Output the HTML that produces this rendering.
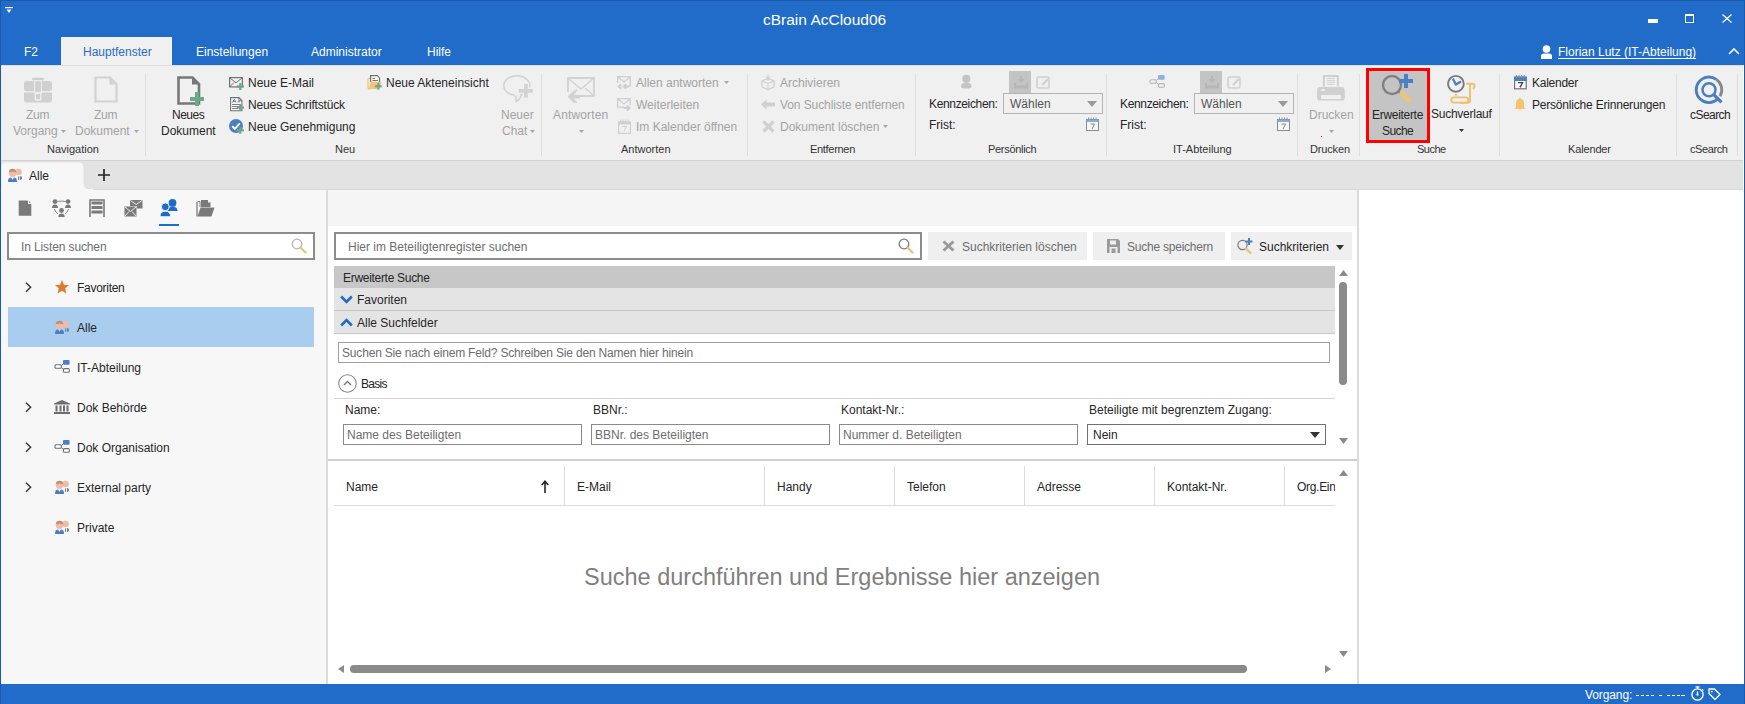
<!DOCTYPE html>
<html><head><meta charset="utf-8">
<style>
*{margin:0;padding:0;box-sizing:border-box}
html,body{width:1745px;height:704px;overflow:hidden;background:#fff;font-family:"Liberation Sans",sans-serif;font-size:12px;color:#262626}
.a{position:absolute}
.t{position:absolute;white-space:nowrap;line-height:14px}
.w{color:#fff}
.dis{color:#a3a3a3}
.sep{position:absolute;width:1px;top:74px;height:82px;background:#dedede}
.lbl{position:absolute;white-space:nowrap;line-height:14px;top:142px;color:#333;font-size:11px}
svg{position:absolute;overflow:visible}
</style></head><body>

<!-- ===== TITLE BAR ===== -->
<div class="a" style="left:0;top:0;width:1745px;height:65px;background:#216bc9"></div>
<div class="a" style="left:0;top:0;width:1745px;height:1px;background:#1b5aab"></div>
<!-- quick access icon -->
<svg style="left:4px;top:6px" width="10" height="8" viewBox="0 0 10 8"><rect x="1" y="1" width="8" height="1.2" fill="#fff"/><path d="M2.6 3.6 L7.4 3.6 L5 7 Z" fill="#fff"/></svg>
<div class="t w" style="left:763px;top:11px;font-size:15.5px;line-height:18px">cBrain AcCloud06</div>
<!-- window controls -->
<div class="a" style="left:1648px;top:19px;width:10px;height:4px;background:#fff"></div>
<div class="a" style="left:1685px;top:14px;width:9px;height:9px;border:1px solid #fff;border-top-width:2px"></div>
<svg style="left:1722px;top:14px" width="10" height="9" viewBox="0 0 10 9"><path d="M0.5 0.5 L9.5 8.5 M9.5 0.5 L0.5 8.5" stroke="#fff" stroke-width="1.3"/></svg>

<!-- ribbon tabs -->
<div class="t w" style="left:24px;top:45px">F2</div>
<div class="a" style="left:61px;top:37px;width:111px;height:28px;background:#f0f0f0"></div>
<div class="t" style="left:83px;top:45px;color:#2b6cc4">Hauptfenster</div>
<div class="t w" style="left:196px;top:45px">Einstellungen</div>
<div class="t w" style="left:311px;top:45px">Administrator</div>
<div class="t w" style="left:427px;top:45px">Hilfe</div>
<!-- user -->
<svg style="left:1541px;top:45px" width="11" height="14" viewBox="0 0 11 14"><circle cx="5.5" cy="4" r="3.8" fill="#fff"/><path d="M0 14 L0 11 Q0 8.5 3 8.5 L8 8.5 Q11 8.5 11 11 L11 14 Z" fill="#fff"/></svg>
<div class="t w" style="left:1558px;top:45px;text-decoration:underline;text-decoration-skip-ink:none;text-underline-offset:2px">Florian Lutz (IT-Abteilung)</div>
<svg style="left:1728px;top:47px" width="12" height="8" viewBox="0 0 12 8"><path d="M1 7 L6 2 L11 7" stroke="#fff" stroke-width="1.6" fill="none"/></svg>

<!-- ===== RIBBON ===== -->
<div class="a" style="left:1px;top:65px;width:1742px;height:96px;background:#f0f0f0"></div>
<div class="a" style="left:1px;top:160px;width:1742px;height:1px;background:#d2d2d2"></div>
<div class="a" style="left:1px;top:65px;width:1742px;height:1px;background:#dedede"></div>

<div class="sep" style="left:145px"></div>
<div class="sep" style="left:541px"></div>
<div class="sep" style="left:747px"></div>
<div class="sep" style="left:915px"></div>
<div class="sep" style="left:1106px"></div>
<div class="sep" style="left:1297px"></div>
<div class="sep" style="left:1359px"></div>
<div class="sep" style="left:1499px"></div>
<div class="sep" style="left:1676px"></div>
<div class="sep" style="left:1737px"></div>

<div class="lbl" style="left:47px">Navigation</div>
<div class="lbl" style="left:335px">Neu</div>
<div class="lbl" style="left:621px">Antworten</div>
<div class="lbl" style="left:810px;letter-spacing:-0.3px">Entfernen</div>
<div class="lbl" style="left:988px;letter-spacing:-0.3px">Persönlich</div>
<div class="lbl" style="left:1173px">IT-Abteilung</div>
<div class="lbl" style="left:1310px;letter-spacing:-0.15px">Drucken</div>
<div class="lbl" style="left:1417px;letter-spacing:-0.5px">Suche</div>
<div class="lbl" style="left:1568px;letter-spacing:-0.15px">Kalender</div>
<div class="lbl" style="left:1690px;letter-spacing:-0.4px">cSearch</div>

<!-- Navigation -->
<svg style="left:24px;top:77px" width="28" height="26" viewBox="0 0 28 26"><rect x="8" y="0.8" width="12" height="2.6" rx="1.3" fill="#d0d0d0"/><rect x="0" y="3.9" width="28" height="10.3" rx="2.3" fill="#d0d0d0"/><path d="M0 15.4 L28 15.4 L28 23.2 Q28 25.4 25.8 25.4 L2.2 25.4 Q0 25.4 0 23.2 Z" fill="#d0d0d0"/><rect x="10.1" y="3.3" width="7.8" height="12.8" rx="0.6" fill="#f0f0f0"/><rect x="11.1" y="4.2" width="5.8" height="11" fill="#d0d0d0"/><rect x="11.2" y="16.4" width="5.6" height="6.6" rx="0.8" fill="#d0d0d0" stroke="#f0f0f0" stroke-width="1.3"/></svg>
<svg style="left:94px;top:76px" width="24" height="27" viewBox="0 0 24 27"><path d="M1.5 1.5 L16 1.5 L22.5 8 L22.5 25.5 L1.5 25.5 Z" stroke="#d2d2d2" stroke-width="2.2" fill="none"/><path d="M15.5 1.5 L15.5 8.5 L22.5 8.5" fill="#d2d2d2"/></svg>
<div class="t dis" style="left:26px;top:108px;letter-spacing:-0.3px">Zum</div>
<div class="t dis" style="left:13px;top:124px">Vorgang</div>
<svg style="left:61px;top:130px" width="5" height="3" viewBox="0 0 5 3"><path d="M0 0 L5 0 L2.5 3 Z" fill="#a8a8a8"/></svg>
<div class="t dis" style="left:94px;top:108px;letter-spacing:-0.3px">Zum</div>
<div class="t dis" style="left:75px;top:124px">Dokument</div>
<svg style="left:134px;top:130px" width="5" height="3" viewBox="0 0 5 3"><path d="M0 0 L5 0 L2.5 3 Z" fill="#a8a8a8"/></svg>

<!-- Neu -->
<svg style="left:177px;top:76px" width="28" height="30" viewBox="0 0 28 30"><path d="M1.5 1.5 L15.5 1.5 L22 8 L22 27.5 L1.5 27.5 Z" stroke="#787878" stroke-width="2.6" fill="none"/><path d="M15 1.5 L15 8.5 L22 8.5 Z" fill="#787878"/><rect x="18" y="16" width="4" height="14" fill="#6fa78b"/><rect x="13" y="21" width="14" height="4" fill="#6fa78b"/></svg>
<div class="t" style="left:172px;top:108px;letter-spacing:-0.5px">Neues</div>
<div class="t" style="left:161px;top:124px">Dokument</div>

<svg style="left:229px;top:77px" width="16" height="14" viewBox="0 0 16 14"><rect x="0.6" y="0.6" width="12.8" height="9.3" fill="none" stroke="#727272" stroke-width="1.2"/><path d="M0.8 0.8 L7 5.8 L13.2 0.8 M1 9.5 L5 5.5" stroke="#727272" stroke-width="1" fill="none"/><rect x="10.200000000000001" y="6.0" width="2.2" height="7" fill="#6fa78b"/><rect x="7.700000000000001" y="8.4" width="7.2" height="2.2" fill="#6fa78b"/></svg>
<svg style="left:229px;top:97px" width="16" height="15" viewBox="0 0 16 15"><path d="M1.6 0.6 L10 0.6 L12.9 3.5 L12.9 13.7 L1.6 13.7 Z" fill="#fafafa" stroke="#727272" stroke-width="1.1"/><path d="M9.8 0.6 L9.8 3.7 L12.9 3.7" fill="none" stroke="#727272" stroke-width="0.9"/><path d="M3.5 5.5 L5.3 2.2 L7.1 5.5 M4.2 4.4 L6.4 4.4" stroke="#4a80c2" stroke-width="1" fill="none"/><path d="M8.5 4.8 L11 4.8 M3 7.5 L11 7.5 M3 9.5 L11 9.5 M3 11.5 L9 11.5" stroke="#727272" stroke-width="0.9"/><rect x="10.200000000000001" y="7.0" width="2.2" height="7" fill="#6fa78b"/><rect x="7.700000000000001" y="9.4" width="7.2" height="2.2" fill="#6fa78b"/></svg>
<svg style="left:229px;top:119px" width="16" height="16" viewBox="0 0 16 16"><circle cx="7" cy="7" r="7" fill="#4a80c2"/><path d="M3.2 7.3 L5.8 9.8 L10.8 4.3" stroke="#fff" stroke-width="1.9" fill="none"/><rect x="10.200000000000001" y="7.800000000000001" width="2.2" height="7" fill="#6fa78b"/><rect x="7.700000000000001" y="10.200000000000001" width="7.2" height="2.2" fill="#6fa78b"/></svg>
<div class="t" style="left:248px;top:76px">Neue E-Mail</div>
<div class="t" style="left:248px;top:98px;letter-spacing:-0.18px">Neues Schriftstück</div>
<div class="t" style="left:248px;top:120px">Neue Genehmigung</div>

<svg style="left:367px;top:74px" width="16" height="17" viewBox="0 0 16 17"><path d="M3.5 4 Q1 4 1 6 L1 13 Q1 15 3 15" stroke="#efc274" stroke-width="1.3" fill="none"/><path d="M3.6 8 L3.6 1.6 L10.2 1.6 L12.5 3.9 L12.5 8" fill="#fafafa" stroke="#707070" stroke-width="1.2"/><path d="M5.5 4.4 L8 4.4 M5.5 6.5 L10.8 6.5" stroke="#707070" stroke-width="1"/><path d="M3.5 7.7 L14.8 7.7 L11.8 14.9 L1.8 14.9 Z" fill="#f0c674"/><rect x="10.3" y="8.9" width="2.2" height="6.8" fill="#6fa78b"/><rect x="8.0" y="11.200000000000001" width="6.8" height="2.2" fill="#6fa78b"/></svg>
<div class="t" style="left:386px;top:76px">Neue Akteneinsicht</div>

<svg style="left:503px;top:75px" width="30" height="28" viewBox="0 0 30 28"><ellipse cx="13.8" cy="10.6" rx="13" ry="9.8" fill="none" stroke="#d2d2d2" stroke-width="1.6"/><path d="M11 20 Q14 21.5 13 26.5 Q17 25 18 20" fill="#f0f0f0" stroke="#d2d2d2" stroke-width="1.5"/><path d="M11.5 19.6 L17 19.6" stroke="#f0f0f0" stroke-width="1.8"/><path d="M21 9 L24.8 9 L24.8 14 L29.8 14 L29.8 17.8 L24.8 17.8 L24.8 22.8 L21 22.8 L21 17.8 L15.8 17.8 L15.8 14 L21 14 Z" fill="#d2d2d2" stroke="#f0f0f0" stroke-width="2.4" paint-order="stroke"/></svg>
<div class="t dis" style="left:501px;top:108px">Neuer</div>
<div class="t dis" style="left:502px;top:124px">Chat</div>
<svg style="left:530px;top:130px" width="5" height="3" viewBox="0 0 5 3"><path d="M0 0 L5 0 L2.5 3 Z" fill="#a8a8a8"/></svg>

<!-- Antworten -->
<svg style="left:567px;top:77px" width="29" height="27" viewBox="0 0 29 27"><path d="M13 19 L27 19 L27 1 L1 1 L1 15" stroke="#d2d2d2" stroke-width="1.9" fill="none" stroke-linejoin="round"/><path d="M1.5 1.5 L14 12 L26.5 1.5 M26.5 18.5 L18 11 M7.5 15 L10 12.5" stroke="#d2d2d2" stroke-width="1.4" fill="none"/><path d="M0.5 19.5 L6.5 13.8 L10.5 13.8 L6.8 17.8 L13 17.8 L13 21.6 L6.8 21.6 L10.5 25.7 L6.5 25.7 Z" fill="#d2d2d2"/></svg>
<div class="t dis" style="left:553px;top:108px;letter-spacing:0.15px">Antworten</div>
<svg style="left:579px;top:130px" width="5" height="3" viewBox="0 0 5 3"><path d="M0 0 L5 0 L2.5 3 Z" fill="#a8a8a8"/></svg>

<svg style="left:617px;top:76px" width="15" height="14" viewBox="0 0 15 14"><path d="M12 9.9 L13.2 9.9 L13.2 0.7 L0.7 0.7 L0.7 7" stroke="#cdcdcd" stroke-width="1.3" fill="none"/><path d="M1 1 L7 6 L13 1" stroke="#cdcdcd" stroke-width="1.1" fill="none"/><path d="M4.2 8.2 L1.8 10.5 L4.2 12.8 M9.2 8.2 L6.8 10.5 L9.2 12.8 M7.5 10.5 L12 10.5" stroke="#cdcdcd" stroke-width="2" fill="none"/></svg>
<svg style="left:617px;top:98px" width="15" height="14" viewBox="0 0 15 14"><path d="M7 9.2 L0.7 9.2 L0.7 0.7 L13.2 0.7 L13.2 7" stroke="#cdcdcd" stroke-width="1.3" fill="none"/><path d="M1 1 L7 6 L13 1" stroke="#cdcdcd" stroke-width="1.1" fill="none"/><path d="M6.5 10 L12 10 M10 7.5 L12.6 10 L10 12.5" stroke="#cdcdcd" stroke-width="2" fill="none"/></svg>
<svg style="left:618px;top:119px" width="13" height="15" viewBox="0 0 13 15"><rect x="0.6" y="3" width="11.8" height="11.4" fill="none" stroke="#cfcfcf" stroke-width="1.2"/><rect x="0.6" y="3" width="11.8" height="2.5" fill="#cfcfcf"/><path d="M2.5 0.5 L2.5 3 M5 0.5 L5 3 M7.5 0.5 L7.5 3 M10 0.5 L10 3" stroke="#cfcfcf" stroke-width="1"/><path d="M4.5 7.5 L8.5 7.5 L6 12.5" stroke="#cfcfcf" stroke-width="1" fill="none"/></svg>
<div class="t dis" style="left:636px;top:76px">Allen antworten</div>
<svg style="left:724px;top:81px" width="5" height="3" viewBox="0 0 5 3"><path d="M0 0 L5 0 L2.5 3 Z" fill="#a8a8a8"/></svg>
<div class="t dis" style="left:636px;top:98px">Weiterleiten</div>
<div class="t dis" style="left:636px;top:120px">Im Kalender öffnen</div>

<!-- Entfernen -->
<svg style="left:761px;top:74px" width="14" height="16" viewBox="0 0 14 16"><path d="M7 0.5 L7 5 M5 3 L7 5.5 L9 3" stroke="#d0d0d0" stroke-width="1.4" fill="none"/><path d="M1 7 L7 4.5 L13 7 L13 13 L7 15.5 L1 13 Z" fill="none" stroke="#d0d0d0" stroke-width="1.3"/><path d="M1 7 L7 9.5 L13 7 M7 9.5 L7 15.5" stroke="#d0d0d0" stroke-width="1.1" fill="none"/></svg>
<svg style="left:761px;top:99px" width="14" height="11" viewBox="0 0 14 11"><path d="M0 5.5 L5.5 0.5 L5.5 3.5 L14 3.5 L14 7.5 L5.5 7.5 L5.5 10.5 Z" fill="#d0d0d0"/></svg>
<svg style="left:762px;top:120px" width="13" height="13" viewBox="0 0 13 13"><path d="M1.5 1.5 L11.5 11.5 M11.5 1.5 L1.5 11.5" stroke="#d0d0d0" stroke-width="3.2"/></svg>
<div class="t dis" style="left:780px;top:76px">Archivieren</div>
<div class="t dis" style="left:780px;top:98px;letter-spacing:-0.09px">Von Suchliste entfernen</div>
<div class="t dis" style="left:780px;top:120px">Dokument löschen</div>
<svg style="left:883px;top:125px" width="5" height="3" viewBox="0 0 5 3"><path d="M0 0 L5 0 L2.5 3 Z" fill="#a8a8a8"/></svg>

<!-- Persönlich -->
<svg style="left:961px;top:74px" width="11" height="15" viewBox="0 0 11 15"><circle cx="5.3" cy="4.8" r="4.1" fill="#c4c4c4"/><path d="M0 12.5 Q0 8.6 5.3 8.6 Q10.6 8.6 10.6 12.5 Q10.6 14.6 5.3 14.6 Q0 14.6 0 12.5 Z" fill="#c4c4c4"/></svg>
<div class="a" style="left:1009px;top:71px;width:22px;height:22px;background:#c4c4c4"></div>
<svg style="left:1014px;top:76px" width="13" height="12" viewBox="0 0 13 12"><path d="M7 0 L7 5 M4.5 3 L7 5.5 L9.5 3" stroke="#b6b6b6" stroke-width="1.8" fill="none"/><path d="M0 7 L2 7 L2 9.5 L12 9.5 L12 7 L14 7 L14 12.5 L0 12.5 Z" fill="#b6b6b6"/></svg>
<svg style="left:1036px;top:76px" width="14" height="13" viewBox="0 0 14 13"><rect x="1" y="1" width="12" height="11" rx="1.5" fill="none" stroke="#d0d0d0" stroke-width="1.6"/><path d="M6 9 L12 3" stroke="#d0d0d0" stroke-width="2.2"/></svg>
<div class="t" style="left:929px;top:97px;letter-spacing:-0.35px">Kennzeichen:</div>
<div class="a" style="left:1003px;top:93px;width:100px;height:21px;border:1px solid #b4b4b4;background:#f0f0f0"></div>
<div class="t" style="left:1010px;top:97px;color:#555">Wählen</div>
<svg style="left:1087px;top:101px" width="10" height="6" viewBox="0 0 10 6"><path d="M0 0 L10 0 L5 6 Z" fill="#9a9a9a"/></svg>
<div class="t" style="left:929px;top:118px">Frist:</div>
<svg style="left:1086px;top:117px" width="13" height="14" viewBox="0 0 13 14"><rect x="0.5" y="2.5" width="12" height="11" fill="#f7f7f7" stroke="#8a8a8a" stroke-width="1"/><rect x="0.5" y="2.5" width="12" height="2.5" fill="#86acd8"/><path d="M2.5 0.5 L2.5 2.5 M5 0.5 L5 2.5 M7.5 0.5 L7.5 2.5 M10 0.5 L10 2.5" stroke="#8a8a8a" stroke-width="0.9"/><path d="M4.5 7 L8.5 7 L6 12" stroke="#7a7a7a" stroke-width="0.9" fill="none"/></svg>

<!-- IT-Abteilung -->
<svg style="left:1149px;top:75px" width="16" height="13" viewBox="0 0 16 13"><rect x="1" y="4.7" width="6.3" height="3.6" rx="1" fill="#f0f0f0" stroke="#b5b5b5" stroke-width="1.1"/><rect x="9" y="0" width="6.6" height="4.7" rx="1" fill="#8fb3db"/><rect x="9.5" y="8.6" width="5.8" height="3.7" rx="1" fill="#f0f0f0" stroke="#b5b5b5" stroke-width="1.1"/><path d="M7.3 5.5 L9 4 M7.3 7.5 L9.5 9.3" stroke="#b5b5b5" stroke-width="1" fill="none"/></svg>
<div class="a" style="left:1200px;top:71px;width:22px;height:22px;background:#c4c4c4"></div>
<svg style="left:1205px;top:76px" width="13" height="12" viewBox="0 0 13 12"><path d="M7 0 L7 5 M4.5 3 L7 5.5 L9.5 3" stroke="#b6b6b6" stroke-width="1.8" fill="none"/><path d="M0 7 L2 7 L2 9.5 L12 9.5 L12 7 L14 7 L14 12.5 L0 12.5 Z" fill="#b6b6b6"/></svg>
<svg style="left:1227px;top:76px" width="14" height="13" viewBox="0 0 14 13"><rect x="1" y="1" width="12" height="11" rx="1.5" fill="none" stroke="#d0d0d0" stroke-width="1.6"/><path d="M6 9 L12 3" stroke="#d0d0d0" stroke-width="2.2"/></svg>
<div class="t" style="left:1120px;top:97px;letter-spacing:-0.35px">Kennzeichen:</div>
<div class="a" style="left:1194px;top:93px;width:100px;height:21px;border:1px solid #b4b4b4;background:#f0f0f0"></div>
<div class="t" style="left:1201px;top:97px;color:#555">Wählen</div>
<svg style="left:1278px;top:101px" width="10" height="6" viewBox="0 0 10 6"><path d="M0 0 L10 0 L5 6 Z" fill="#9a9a9a"/></svg>
<div class="t" style="left:1120px;top:118px">Frist:</div>
<svg style="left:1277px;top:117px" width="13" height="14" viewBox="0 0 13 14"><rect x="0.5" y="2.5" width="12" height="11" fill="#f7f7f7" stroke="#8a8a8a" stroke-width="1"/><rect x="0.5" y="2.5" width="12" height="2.5" fill="#86acd8"/><path d="M2.5 0.5 L2.5 2.5 M5 0.5 L5 2.5 M7.5 0.5 L7.5 2.5 M10 0.5 L10 2.5" stroke="#8a8a8a" stroke-width="0.9"/><path d="M4.5 7 L8.5 7 L6 12" stroke="#7a7a7a" stroke-width="0.9" fill="none"/></svg>

<!-- Drucken -->
<svg style="left:1317px;top:75px" width="28" height="26" viewBox="0 0 28 26"><path d="M6.9 11.5 L6.9 1 L20.9 1 L20.9 11.5" stroke="#d0d0d0" stroke-width="2" fill="none"/><path d="M10 3.5 L18 3.5 M10 5.5 L18 5.5 M10 7.5 L18 7.5 M10 9.5 L18 9.5" stroke="#d0d0d0" stroke-width="0.9"/><rect x="0" y="11.9" width="27.8" height="13.7" rx="3.2" fill="#d0d0d0"/><rect x="4" y="14.3" width="4" height="1.8" rx="0.8" fill="#f0f0f0"/><rect x="4" y="20.1" width="20" height="3.8" rx="1" fill="#f0f0f0"/></svg>
<div class="t dis" style="left:1309px;top:108px">Drucken</div>
<svg style="left:1329px;top:130px" width="5" height="3" viewBox="0 0 5 3"><path d="M0 0 L5 0 L2.5 3 Z" fill="#a8a8a8"/></svg>
<div class="a" style="left:1321px;top:136px;width:1px;height:1px;background:#f00"></div>

<!-- Suche -->
<div class="a" style="left:1366px;top:68px;width:64px;height:75px;border:3px solid #ff0000;background:#c4c4c4"></div>
<svg style="left:1381px;top:73px" width="33" height="33" viewBox="0 0 33 33"><circle cx="11" cy="12" r="9" fill="none" stroke="#808080" stroke-width="2.4"/><path d="M17 18 L19 20" stroke="#808080" stroke-width="2.4"/><path d="M21 20.5 L28.5 28" stroke="#e9c47c" stroke-width="5" stroke-linecap="round"/><rect x="23" y="1" width="4" height="14" fill="#4a80c2"/><rect x="18" y="6" width="14" height="4" fill="#4a80c2"/></svg>
<div class="t" style="left:1372px;top:108px;letter-spacing:-0.3px">Erweiterte</div>
<div class="t" style="left:1382px;top:124px;letter-spacing:-0.6px">Suche</div>

<svg style="left:1440px;top:70px" width="42" height="38" viewBox="0 0 42 38"><circle cx="15.9" cy="13.8" r="7.9" fill="none" stroke="#7a7a7a" stroke-width="1.9"/><path d="M13.3 9.5 L15.8 14.6 L20.2 12" stroke="#4a80c2" stroke-width="2.3" fill="none" stroke-linejoin="round" stroke-linecap="round"/><rect x="14.9" y="23.9" width="2" height="2" fill="#ecc16e"/><rect x="11.3" y="27.4" width="17" height="5.3" rx="2.65" fill="none" stroke="#ecc16e" stroke-width="1.8"/><path d="M30 14 L30 30.5 Q30 32.7 27.8 32.7 L20 32.7" stroke="#ecc16e" stroke-width="1.9" fill="none"/><path d="M26.2 13.8 L32.4 13.8 Q34.6 13.8 34.6 16 Q34.6 18 32.8 18.8" stroke="#ecc16e" stroke-width="1.9" fill="none"/></svg>
<div class="t" style="left:1431px;top:107px;letter-spacing:-0.25px">Suchverlauf</div>
<svg style="left:1459px;top:129px" width="5" height="3" viewBox="0 0 5 3"><path d="M0 0 L5 0 L2.5 3 Z" fill="#333"/></svg>

<!-- Kalender -->
<svg style="left:1514px;top:75px" width="13" height="15" viewBox="0 0 13 15"><rect x="0.6" y="2" width="11.6" height="11.8" fill="#fafafa" stroke="#747474" stroke-width="1.2"/><rect x="0" y="2" width="12.8" height="4" fill="#4a80c2"/><path d="M2.5 0 L2.5 3 M5 0 L5 3 M7.6 0 L7.6 3 M10.2 0 L10.2 3" stroke="#8a8a8a" stroke-width="1.1"/><path d="M4 7.6 L8.6 7.6 L6 12.4" stroke="#444" stroke-width="1.3" fill="none"/></svg>
<div class="t" style="left:1532px;top:76px;letter-spacing:-0.25px">Kalender</div>
<svg style="left:1514px;top:97px" width="12" height="14" viewBox="0 0 12 14"><path d="M6 0.5 Q6.8 0.5 6.8 1.8 Q10 2.6 10 6.5 L10 10 L11.5 12 L0.5 12 L2 10 L2 6.5 Q2 2.6 5.2 1.8 Q5.2 0.5 6 0.5 Z" fill="#f2c46e"/><path d="M4.5 12.5 Q6 14.5 7.5 12.5 Z" fill="#f2c46e"/></svg>
<div class="t" style="left:1532px;top:98px;letter-spacing:-0.2px">Persönliche Erinnerungen</div>

<!-- cSearch -->
<svg style="left:1685px;top:68px" width="50" height="42" viewBox="0 0 50 42"><path d="M32.57 31.3 A12.8 12.8 0 1 1 31.35 11.32" stroke="#4a7fbf" stroke-width="2.8" fill="none"/><path d="M31.35 11.32 A12.8 12.8 0 0 1 35.08 28.2" stroke="#878787" stroke-width="2.8" fill="none"/><circle cx="24" cy="21.8" r="6.5" fill="none" stroke="#4a7fbf" stroke-width="2.5"/><path d="M28.8 26.6 L36.5 34.3" stroke="#4a7fbf" stroke-width="3.3"/></svg>
<div class="t" style="left:1690px;top:108px;letter-spacing:-0.55px">cSearch</div>


<!-- ===== DOC TAB STRIP ===== -->
<div class="a" style="left:1px;top:161px;width:1742px;height:29px;background:#e3e3e3"></div>
<div class="a" style="left:1px;top:189px;width:1742px;height:1px;background:#d9d9d9"></div>

<!-- doc tab -->
<svg style="left:1px;top:162px" width="92" height="28" viewBox="0 0 92 28"><path d="M0 28 L0 5 Q0 0 5 0 L77 0 Q83 0 83 6 L83 20 Q83 27 90 28 Z" fill="#f7f7f7" stroke="#d8d8d8" stroke-width="0.6"/><rect x="0" y="27" width="92" height="1" fill="#f7f7f7"/></svg>
<svg style="left:8px;top:168px" width="15" height="14" viewBox="0 0 15 14"><circle cx="10.6" cy="3.9" r="3.2" fill="#f2bba6"/><circle cx="4.5" cy="5.3" r="3.6" fill="#f2bba6"/><path d="M0.8 5 Q0.6 0.6 4.5 0.7 Q8.6 0.7 8.4 5 L7.2 3.6 L6 4.6 L4.5 3 L3 4.6 L1.8 3.6 Z" fill="#b99270"/><path d="M0 14 Q0 9.6 3 9.6 L4.5 11.8 L6 9.6 Q9 9.6 9 14 Z" fill="#4a80c0"/><path d="M12 8 A2 2 0 0 1 12 12 Z" fill="#7a7a7a"/><rect x="10" y="8.3" width="1.2" height="3.5" fill="#6d8db0"/></svg>
<div class="t" style="left:29px;top:169px">Alle</div>
<svg style="left:98px;top:169px" width="12" height="12" viewBox="0 0 12 12"><path d="M6 0 L6 12 M0 6 L12 6" stroke="#262626" stroke-width="1.7"/></svg>

<!-- left panel -->
<div class="a" style="left:1px;top:190px;width:325px;height:494px;background:#f7f7f7"></div>
<div class="a" style="left:326px;top:190px;width:2px;height:494px;background:#dcdcdc"></div>
<!-- left toolbar icons -->
<svg style="left:18px;top:200px" width="14" height="16" viewBox="0 0 14 16"><path d="M0.7 0.5 L9.5 0.5 L13.3 4.3 L13.3 15.7 L0.7 15.7 Z" fill="#7a7a7a"/><path d="M10 0 L14 4 L10 4 Z" fill="#f7f7f7"/><rect x="11" y="1.5" width="1.3" height="1.3" fill="#7a7a7a"/></svg>
<svg style="left:52px;top:199px" width="19" height="19" viewBox="0 0 19 19"><circle cx="3" cy="2.6" r="2.4" fill="#7a7a7a"/><circle cx="16" cy="2.6" r="2.4" fill="#7a7a7a"/><path d="M0 9 Q0 5.5 3 5.5 Q6 5.5 6 9 Z M13 9 Q13 5.5 16 5.5 Q19 5.5 19 9 Z" fill="#7a7a7a"/><circle cx="9.5" cy="11.5" r="2.4" fill="#7a7a7a"/><path d="M6.3 18 Q6.3 14.5 9.5 14.5 Q12.7 14.5 12.7 18 Z" fill="#7a7a7a"/><path d="M5.5 2.5 Q9.5 1.5 13.5 2.5 M2.5 10 Q3.5 13.5 6 15 M16.5 10 Q15.5 13.5 13 15" stroke="#7a7a7a" stroke-width="0.9" fill="none"/></svg>
<svg style="left:89px;top:199px" width="16" height="18" viewBox="0 0 16 18"><path d="M1 18 L1 1 L15 1 L15 18" stroke="#7a7a7a" stroke-width="1.6" fill="none"/><rect x="2.5" y="2.5" width="11" height="3" fill="#7a7a7a"/><rect x="2.5" y="7" width="11" height="3" fill="#7a7a7a"/><rect x="2.5" y="11.5" width="11" height="3" fill="#7a7a7a"/></svg>
<svg style="left:124px;top:199px" width="19" height="18" viewBox="0 0 19 18"><path d="M6 1 L18.5 1 L18.5 9.5 L13 9.5 L13 7 L6 7 Z" fill="#7a7a7a"/><path d="M6.5 1.5 L12.2 5.5 L18 1.5" stroke="#f7f7f7" stroke-width="0.9" fill="none"/><rect x="0.5" y="7.5" width="12" height="10" fill="#7a7a7a"/><path d="M1 8 L6.5 12.5 L12 8 M1 17 L5 12.5 M12 17 L8 12.5" stroke="#f7f7f7" stroke-width="0.9" fill="none"/></svg>
<svg style="left:160px;top:199px" width="18" height="18" viewBox="0 0 18 18"><circle cx="12.5" cy="3.9" r="3.9" fill="#1f6bc9"/><path d="M8 12 Q8 7.8 12.5 7.8 Q17.5 7.8 17.5 12 Z" fill="#1f6bc9"/><circle cx="5.3" cy="7.8" r="3.9" fill="#1f6bc9" stroke="#f7f7f7" stroke-width="0.9"/><path d="M0 17.7 Q0 12.2 5.3 12.2 Q10.6 12.2 10.6 17.7 Z" fill="#1f6bc9" stroke="#f7f7f7" stroke-width="0.9"/></svg>
<div class="a" style="left:159px;top:224px;width:20px;height:2px;background:#1f6bc9"></div>
<svg style="left:196px;top:199px" width="19" height="18" viewBox="0 0 19 18"><path d="M5 1 L12 1 L14.5 3.5 L14.5 8 L5 8 Z" fill="#7a7a7a"/><path d="M12 0.5 L15 3.5 L12 3.5 Z" fill="#f7f7f7"/><path d="M1.5 2.5 L4 2.5 L4 8" stroke="#7a7a7a" stroke-width="1" fill="none"/><path d="M1 3 L1 17.5" stroke="#7a7a7a" stroke-width="1.3"/><path d="M4.5 8.5 L18.5 8.5 L15.5 17.5 L1.5 17.5 Z" fill="#7a7a7a"/></svg>

<!-- left search -->
<div class="a" style="left:7px;top:232px;width:308px;height:28px;border:2px solid #8c8c8c;background:#fff"></div>
<div class="t" style="left:21px;top:240px;color:#6d6d6d;letter-spacing:-0.12px">In Listen suchen</div>
<svg style="left:291px;top:238px" width="16" height="16" viewBox="0 0 16 16"><circle cx="6" cy="6" r="4.8" fill="none" stroke="#b5b5b5" stroke-width="1.3"/><path d="M10 10 L14.5 14.5" stroke="#e9c47c" stroke-width="2.4" stroke-linecap="round"/></svg>

<!-- tree -->
<div class="a" style="left:8px;top:307px;width:306px;height:40px;background:#a9cdef"></div>
<svg style="left:25px;top:282px" width="7" height="11" viewBox="0 0 7 11"><path d="M1 0.8 L5.6 5.3 L1 9.8" stroke="#333" stroke-width="1.45" fill="none"/></svg>
<svg style="left:55px;top:280px" width="14" height="14" viewBox="0 0 14 14"><path d="M7 0 L9 4.7 L14 5.1 L10.2 8.3 L11.4 13.5 L7 10.8 L2.6 13.5 L3.8 8.3 L0 5.1 L5 4.7 Z" fill="#dd7b35"/></svg>
<div class="t" style="left:77px;top:281px;letter-spacing:-0.28px">Favoriten</div>
<svg style="left:55px;top:320px" width="15" height="14" viewBox="0 0 15 14"><circle cx="10.6" cy="3.9" r="3.2" fill="#f2bba6"/><circle cx="4.5" cy="5.3" r="3.6" fill="#f2bba6"/><path d="M0.8 5 Q0.6 0.6 4.5 0.7 Q8.6 0.7 8.4 5 L7.2 3.6 L6 4.6 L4.5 3 L3 4.6 L1.8 3.6 Z" fill="#b99270"/><path d="M0 14 Q0 9.6 3 9.6 L4.5 11.8 L6 9.6 Q9 9.6 9 14 Z" fill="#4a80c0"/><path d="M12 8 A2 2 0 0 1 12 12 Z" fill="#7a7a7a"/><rect x="10" y="8.3" width="1.2" height="3.5" fill="#6d8db0"/></svg>
<div class="t" style="left:77px;top:321px">Alle</div>
<svg style="left:54px;top:360px" width="16" height="13" viewBox="0 0 16 13"><rect x="1" y="4.7" width="6.3" height="3.6" rx="1" fill="#fff" stroke="#6e6e6e" stroke-width="1.1"/><rect x="9" y="0" width="6.6" height="4.7" rx="1" fill="#4a80c2"/><rect x="9.5" y="8.6" width="5.8" height="3.7" rx="1" fill="#fff" stroke="#6e6e6e" stroke-width="1.1"/><path d="M7.3 5.5 L9 4 M7.3 7.5 L9.5 9.3" stroke="#6e6e6e" stroke-width="1" fill="none"/></svg>
<div class="t" style="left:77px;top:361px">IT-Abteilung</div>
<svg style="left:25px;top:402px" width="7" height="11" viewBox="0 0 7 11"><path d="M1 0.8 L5.6 5.3 L1 9.8" stroke="#333" stroke-width="1.45" fill="none"/></svg>
<svg style="left:54px;top:400px" width="16" height="14" viewBox="0 0 16 14"><path d="M8 0 L16 3.5 L16 4.5 L0 4.5 L0 3.5 Z" fill="#6e6e6e"/><rect x="1.5" y="5.5" width="2" height="6" fill="#6e6e6e"/><rect x="5.5" y="5.5" width="2" height="6" fill="#6e6e6e"/><rect x="9" y="5.5" width="2" height="6" fill="#6e6e6e"/><rect x="12.5" y="5.5" width="2" height="6" fill="#6e6e6e"/><rect x="0" y="12" width="16" height="2" fill="#6e6e6e"/></svg>
<div class="t" style="left:77px;top:401px">Dok Behörde</div>
<svg style="left:25px;top:442px" width="7" height="11" viewBox="0 0 7 11"><path d="M1 0.8 L5.6 5.3 L1 9.8" stroke="#333" stroke-width="1.45" fill="none"/></svg>
<svg style="left:54px;top:440px" width="16" height="13" viewBox="0 0 16 13"><rect x="1" y="4.7" width="6.3" height="3.6" rx="1" fill="#fff" stroke="#6e6e6e" stroke-width="1.1"/><rect x="9" y="0" width="6.6" height="4.7" rx="1" fill="#4a80c2"/><rect x="9.5" y="8.6" width="5.8" height="3.7" rx="1" fill="#fff" stroke="#6e6e6e" stroke-width="1.1"/><path d="M7.3 5.5 L9 4 M7.3 7.5 L9.5 9.3" stroke="#6e6e6e" stroke-width="1" fill="none"/></svg>
<div class="t" style="left:77px;top:441px">Dok Organisation</div>
<svg style="left:25px;top:482px" width="7" height="11" viewBox="0 0 7 11"><path d="M1 0.8 L5.6 5.3 L1 9.8" stroke="#333" stroke-width="1.45" fill="none"/></svg>
<svg style="left:55px;top:480px" width="15" height="14" viewBox="0 0 15 14"><circle cx="10.6" cy="3.9" r="3.2" fill="#f2bba6"/><circle cx="4.5" cy="5.3" r="3.6" fill="#f2bba6"/><path d="M0.8 5 Q0.6 0.6 4.5 0.7 Q8.6 0.7 8.4 5 L7.2 3.6 L6 4.6 L4.5 3 L3 4.6 L1.8 3.6 Z" fill="#b99270"/><path d="M0 14 Q0 9.6 3 9.6 L4.5 11.8 L6 9.6 Q9 9.6 9 14 Z" fill="#4a80c0"/><path d="M12 8 A2 2 0 0 1 12 12 Z" fill="#7a7a7a"/><rect x="10" y="8.3" width="1.2" height="3.5" fill="#6d8db0"/></svg>
<div class="t" style="left:77px;top:481px">External party</div>
<svg style="left:55px;top:520px" width="15" height="14" viewBox="0 0 15 14"><circle cx="10.6" cy="3.9" r="3.2" fill="#f2bba6"/><circle cx="4.5" cy="5.3" r="3.6" fill="#f2bba6"/><path d="M0.8 5 Q0.6 0.6 4.5 0.7 Q8.6 0.7 8.4 5 L7.2 3.6 L6 4.6 L4.5 3 L3 4.6 L1.8 3.6 Z" fill="#b99270"/><path d="M0 14 Q0 9.6 3 9.6 L4.5 11.8 L6 9.6 Q9 9.6 9 14 Z" fill="#4a80c0"/><path d="M12 8 A2 2 0 0 1 12 12 Z" fill="#7a7a7a"/><rect x="10" y="8.3" width="1.2" height="3.5" fill="#6d8db0"/></svg>
<div class="t" style="left:77px;top:521px">Private</div>

<!-- center panel -->
<div class="a" style="left:328px;top:190px;width:1029px;height:36px;background:#f5f5f5"></div>
<div class="a" style="left:1357px;top:190px;width:2px;height:494px;background:#dcdcdc"></div>
<!-- main search -->
<div class="a" style="left:334px;top:232px;width:588px;height:28px;border:2px solid #8c8c8c;background:#fff"></div>
<div class="t" style="left:348px;top:240px;color:#6d6d6d">Hier im Beteiligtenregister suchen</div>
<svg style="left:898px;top:238px" width="16" height="16" viewBox="0 0 16 16"><circle cx="6" cy="6" r="4.8" fill="none" stroke="#7a7a7a" stroke-width="1.3"/><path d="M10 10 L14.5 14.5" stroke="#e9c47c" stroke-width="2.4" stroke-linecap="round"/></svg>
<!-- buttons -->
<div class="a" style="left:928px;top:232px;width:159px;height:28px;background:#efefef"></div>
<svg style="left:942px;top:240px" width="13" height="12" viewBox="0 0 13 12"><path d="M1.5 1.5 L11.5 10.5 M11.5 1.5 L1.5 10.5" stroke="#9a9a9a" stroke-width="3"/></svg>
<div class="t" style="left:962px;top:240px;color:#6d6d6d">Suchkriterien löschen</div>
<div class="a" style="left:1093px;top:232px;width:132px;height:28px;background:#efefef"></div>
<svg style="left:1107px;top:239px" width="13" height="14" viewBox="0 0 13 14"><path d="M0 0 L11 0 L13 2 L13 14 L0 14 Z" fill="#9a9a9a"/><rect x="3" y="1.5" width="6" height="4" fill="#efefef"/><rect x="2.5" y="8" width="8" height="6" fill="#efefef"/><rect x="4.5" y="9.5" width="4" height="4.5" fill="#9a9a9a"/></svg>
<div class="t" style="left:1127px;top:240px;color:#6d6d6d;letter-spacing:-0.23px">Suche speichern</div>
<div class="a" style="left:1231px;top:232px;width:121px;height:28px;background:#efefef"></div>
<svg style="left:1237px;top:238px" width="16" height="16" viewBox="0 0 16 16"><circle cx="5.5" cy="7" r="4.6" fill="none" stroke="#7a7a7a" stroke-width="1.2"/><path d="M9 10.5 L13.5 15" stroke="#e9c47c" stroke-width="2.4" stroke-linecap="round"/><rect x="11" y="0" width="2" height="7" fill="#4a80c2"/><rect x="8.5" y="2.5" width="7" height="2" fill="#4a80c2"/></svg>
<div class="t" style="left:1259px;top:240px">Suchkriterien</div>
<svg style="left:1336px;top:245px" width="8" height="5" viewBox="0 0 8 5"><path d="M0 0 L8 0 L4 5 Z" fill="#333"/></svg>

<!-- criteria panel -->
<div class="a" style="left:334px;top:266px;width:1001px;height:22px;background:#c6c7c6"></div>
<div class="t" style="left:343px;top:271px;letter-spacing:-0.3px">Erweiterte Suche</div>
<div class="a" style="left:334px;top:288px;width:1001px;height:22px;background:#e4e4e4"></div>
<div class="a" style="left:334px;top:310px;width:1001px;height:1px;background:#c8c8c8"></div>
<svg style="left:340px;top:295px" width="13" height="9" viewBox="0 0 13 9"><path d="M1.2 1.5 L6.5 7 L11.8 1.5" stroke="#1f6bc9" stroke-width="2.6" fill="none"/></svg>
<div class="t" style="left:357px;top:293px">Favoriten</div>
<div class="a" style="left:334px;top:311px;width:1001px;height:22px;background:#e4e4e4"></div>
<div class="a" style="left:334px;top:333px;width:1001px;height:1px;background:#c8c8c8"></div>
<svg style="left:340px;top:318px" width="13" height="9" viewBox="0 0 13 9"><path d="M1.2 7.5 L6.5 2 L11.8 7.5" stroke="#1f6bc9" stroke-width="2.6" fill="none"/></svg>
<div class="t" style="left:357px;top:316px">Alle Suchfelder</div>

<div class="a" style="left:338px;top:342px;width:992px;height:21px;border:1px solid #a0a0a0;background:#fff"></div>
<div class="t" style="left:342px;top:346px;color:#6d6d6d;letter-spacing:-0.18px">Suchen Sie nach einem Feld? Schreiben Sie den Namen hier hinein</div>
<svg style="left:338px;top:374px" width="20" height="20" viewBox="0 0 20 20"><circle cx="9.5" cy="9.5" r="8.8" fill="#fff" stroke="#8a8a8a" stroke-width="1.1"/><path d="M6 11 L9.5 7.5 L13 11" stroke="#777" stroke-width="1.4" fill="none"/></svg>
<div class="t" style="left:361px;top:377px;letter-spacing:-0.7px">Basis</div>
<div class="a" style="left:334px;top:398px;width:1001px;height:1px;background:#d4d4d4"></div>

<div class="t" style="left:345px;top:403px">Name:</div>
<div class="t" style="left:593px;top:403px">BBNr.:</div>
<div class="t" style="left:841px;top:403px">Kontakt-Nr.:</div>
<div class="t" style="left:1089px;top:403px">Beteiligte mit begrenztem Zugang:</div>
<div class="a" style="left:343px;top:424px;width:239px;height:21px;border:1px solid #8a8a8a;background:#fff"></div>
<div class="t" style="left:347px;top:428px;color:#6d6d6d">Name des Beteiligten</div>
<div class="a" style="left:591px;top:424px;width:239px;height:21px;border:1px solid #8a8a8a;background:#fff"></div>
<div class="t" style="left:595px;top:428px;color:#6d6d6d">BBNr. des Beteiligten</div>
<div class="a" style="left:839px;top:424px;width:239px;height:21px;border:1px solid #8a8a8a;background:#fff"></div>
<div class="t" style="left:843px;top:428px;color:#6d6d6d">Nummer d. Beteiligten</div>
<div class="a" style="left:1087px;top:424px;width:239px;height:21px;border:1px solid #707070;background:#fff"></div>
<div class="t" style="left:1093px;top:428px">Nein</div>
<svg style="left:1310px;top:432px" width="10" height="6" viewBox="0 0 10 6"><path d="M0 0 L10 0 L5 6 Z" fill="#333"/></svg>

<!-- criteria scrollbar -->
<svg style="left:1339px;top:270px" width="9" height="6" viewBox="0 0 9 6"><path d="M0 6 L9 6 L4.5 0 Z" fill="#8a8a8a"/></svg>
<div class="a" style="left:1339px;top:282px;width:8px;height:103px;border-radius:4px;background:#8a8a8a"></div>
<svg style="left:1339px;top:438px" width="9" height="6" viewBox="0 0 9 6"><path d="M0 0 L9 0 L4.5 6 Z" fill="#8a8a8a"/></svg>

<!-- splitter -->
<div class="a" style="left:328px;top:459px;width:1029px;height:2px;background:#cfcfcf"></div>

<!-- grid header -->
<div class="t" style="left:346px;top:480px">Name</div>
<svg style="left:541px;top:480px" width="8" height="13" viewBox="0 0 8 13"><path d="M4 13 L4 2 M0.8 5 L4 1.2 L7.2 5" stroke="#262626" stroke-width="1.6" fill="none"/></svg>
<div class="a" style="left:564px;top:466px;width:1px;height:39px;background:#dcdcdc"></div>
<div class="t" style="left:577px;top:480px">E-Mail</div>
<div class="a" style="left:764px;top:466px;width:1px;height:39px;background:#dcdcdc"></div>
<div class="t" style="left:777px;top:480px">Handy</div>
<div class="a" style="left:894px;top:466px;width:1px;height:39px;background:#dcdcdc"></div>
<div class="t" style="left:907px;top:480px">Telefon</div>
<div class="a" style="left:1024px;top:466px;width:1px;height:39px;background:#dcdcdc"></div>
<div class="t" style="left:1037px;top:480px">Adresse</div>
<div class="a" style="left:1154px;top:466px;width:1px;height:39px;background:#dcdcdc"></div>
<div class="t" style="left:1167px;top:480px">Kontakt-Nr.</div>
<div class="a" style="left:1284px;top:466px;width:1px;height:39px;background:#dcdcdc"></div>
<div class="a" style="left:1285px;top:466px;width:50px;height:30px;overflow:hidden"><div class="t" style="left:12px;top:14px;letter-spacing:-0.3px">Org.Einheit</div></div>
<div class="a" style="left:334px;top:505px;width:1001px;height:1px;background:#dcdcdc"></div>

<svg style="left:1339px;top:470px" width="9" height="6" viewBox="0 0 9 6"><path d="M0 6 L9 6 L4.5 0 Z" fill="#8a8a8a"/></svg>
<svg style="left:1339px;top:651px" width="9" height="6" viewBox="0 0 9 6"><path d="M0 0 L9 0 L4.5 6 Z" fill="#8a8a8a"/></svg>

<div class="t" style="left:584px;top:563px;font-size:23.5px;line-height:28px;color:#7f7f7f">Suche durchführen und Ergebnisse hier anzeigen</div>

<!-- h scrollbar -->
<svg style="left:338px;top:665px" width="6" height="8" viewBox="0 0 6 8"><path d="M6 0 L6 8 L0 4 Z" fill="#8a8a8a"/></svg>
<div class="a" style="left:350px;top:665px;width:897px;height:8px;border-radius:4px;background:#8a8a8a"></div>
<svg style="left:1325px;top:665px" width="6" height="8" viewBox="0 0 6 8"><path d="M0 0 L0 8 L6 4 Z" fill="#8a8a8a"/></svg>


<!-- ===== STATUS BAR ===== -->
<div class="a" style="left:0;top:684px;width:1745px;height:20px;background:#216bc9"></div>
<div class="t w" style="left:1585px;top:688px;letter-spacing:-0.1px">Vorgang:</div><div class="a" style="left:1636.00px;top:694.6px;width:3.4px;height:1.2px;background:#fff"></div><div class="a" style="left:1640.85px;top:694.6px;width:3.4px;height:1.2px;background:#fff"></div><div class="a" style="left:1645.70px;top:694.6px;width:3.4px;height:1.2px;background:#fff"></div><div class="a" style="left:1650.55px;top:694.6px;width:3.4px;height:1.2px;background:#fff"></div><div class="a" style="left:1666.80px;top:694.6px;width:3.4px;height:1.2px;background:#fff"></div><div class="a" style="left:1671.65px;top:694.6px;width:3.4px;height:1.2px;background:#fff"></div><div class="a" style="left:1676.50px;top:694.6px;width:3.4px;height:1.2px;background:#fff"></div><div class="a" style="left:1681.35px;top:694.6px;width:3.4px;height:1.2px;background:#fff"></div><div class="a" style="left:1658.8px;top:694.6px;width:3.4px;height:1.2px;background:#fff"></div>
<svg style="left:1691px;top:686px" width="14" height="15" viewBox="0 0 14 15"><circle cx="6.5" cy="8.5" r="5.6" fill="none" stroke="#fff" stroke-width="1.4"/><path d="M4.5 0.8 L8.5 0.8 M6.5 0.8 L6.5 3" stroke="#fff" stroke-width="1.3"/><path d="M6.5 5.5 L6.5 8.5" stroke="#fff" stroke-width="1.4"/><circle cx="6.5" cy="8.8" r="1" fill="#fff"/><path d="M11 3.2 L12.5 4.7" stroke="#fff" stroke-width="1.1"/></svg>
<svg style="left:1708px;top:688px" width="13" height="12" viewBox="0 0 13 12"><path d="M1 1 L6.5 1 L12 6.5 L7 11.5 L1 5.5 Z" fill="none" stroke="#fff" stroke-width="1.3" stroke-linejoin="round"/><circle cx="3.8" cy="3.6" r="0.9" fill="#fff"/></svg>

<!-- window borders -->
<div class="a" style="left:0;top:0;width:1px;height:704px;background:#1b5aab"></div>
<div class="a" style="left:1744px;top:0;width:1px;height:704px;background:#1b5aab"></div>
</body></html>
